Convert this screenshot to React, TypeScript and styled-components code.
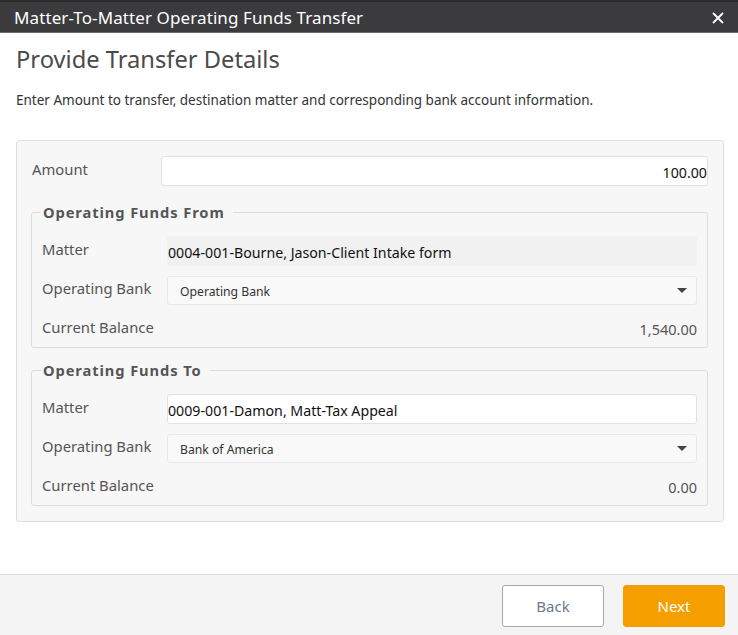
import React from "react";
import styled, { createGlobalStyle } from "styled-components";

const Global = createGlobalStyle`
  html, body { margin: 0; padding: 0; background: #ffffff; }
  body { font-family: "Noto Sans", "Open Sans", sans-serif; color: #333; }
  * { box-sizing: border-box; }
`;

const Dialog = styled.div`
  width: 738px;
  height: 635px;
  display: flex;
  flex-direction: column;
  background: #fff;
`;

const TitleBar = styled.div`
  height: 33px;
  flex: none;
  background: #3b3b3d;
  border-top: 2px solid #2b2b2c;
  border-bottom: 1px solid #6d6d6f;
  display: flex;
  align-items: center;
  justify-content: space-between;
  padding: 0 14px 0 14px;
`;

const TitleText = styled.div`
  color: #fff;
  font-size: 17px;
  letter-spacing: 0.1px;
`;

const CloseIcon = styled.svg`
  width: 12px;
  height: 12px;
  display: block;
  margin-top: 1px;
`;

const Body = styled.div`
  flex: 1;
  padding: 10px 14px 0 16px;
  display: flex;
  flex-direction: column;
`;

const Heading = styled.h1`
  margin: 0;
  font-weight: 400;
  font-size: 23.7px;
  color: #4a4a4a;
  line-height: 32px;
`;

const Intro = styled.p`
  margin: 16px 0 0 0;
  font-size: 13.5px;
  color: #333;
  line-height: 18px;
`;

const Panel = styled.div`
  margin-top: 31px;
  width: 708px;
  background: #f7f7f7;
  border: 1px solid #dedede;
  border-radius: 3px;
  padding: 15px 15px 15px 14px;
  display: flex;
  flex-direction: column;
`;

const AmountRow = styled.div`
  display: grid;
  grid-template-columns: 130px 1fr;
  align-items: center;
  height: 30px;
`;

const Label = styled.div<{ $inset?: boolean }>`
  font-size: 14.8px;
  color: #555;
  padding-left: ${(p) => (p.$inset ? "0" : "1px")};
  margin-top: -5px;
`;

const TextBox = styled.div<{ $align?: string; $filled?: boolean }>`
  height: 30px;
  background: ${(p) => (p.$filled ? "#f1f1f1" : "#fff")};
  border: 1px solid ${(p) => (p.$filled ? "#f1f1f1" : "#e2e2e2")};
  border-radius: 3px;
  display: flex;
  align-items: center;
  justify-content: ${(p) => (p.$align === "right" ? "flex-end" : "flex-start")};
  padding: 2px 0 0 0;
  font-size: 14.2px;
  color: #111;
`;

const Fieldset = styled.fieldset`
  margin: 0;
  border: 1px solid #dcdcdc;
  border-radius: 3px;
  padding: 14px 10px 4px 10px;
  display: flex;
  flex-direction: column;
  gap: 10px;
`;

const Legend = styled.legend`
  font-weight: 700;
  font-size: 14.7px;
  letter-spacing: 0.9px;
  color: #555;
  padding: 0 8px 0 2px;
  margin-left: -1px;
`;

const FieldRow = styled.div`
  display: grid;
  grid-template-columns: 125px 1fr;
  align-items: center;
  min-height: 28px;
`;

const SelectBox = styled.div`
  height: 29px;
  background: #f9f9f9;
  border: 1px solid #e8e8e8;
  border-radius: 3px;
  display: flex;
  align-items: center;
  justify-content: space-between;
  padding: 2px 9px 0 12px;
  font-size: 12.2px;
  color: #333;
`;

const Caret = styled.span`
  width: 0;
  height: 0;
  border-left: 5px solid transparent;
  border-right: 5px solid transparent;
  border-top: 5px solid #444;
  margin-top: -2px;
`;

const Balance = styled.div`
  font-size: 14.5px;
  color: #555;
  text-align: right;
`;

const Footer = styled.div`
  height: 61px;
  flex: none;
  background: #f4f4f4;
  border-top: 1px solid #dadada;
  display: flex;
  align-items: center;
  justify-content: flex-end;
  gap: 19px;
  padding: 2px 13px 0 0;
`;

const Button = styled.button<{ $primary?: boolean }>`
  width: 102px;
  height: 42px;
  border-radius: 3px;
  font-family: inherit;
  font-size: 15px;
  cursor: pointer;
  background: ${(p) => (p.$primary ? "#f59e00" : "#fff")};
  color: ${(p) => (p.$primary ? "#fff" : "#6c7a8a")};
  border: 1px solid ${(p) => (p.$primary ? "#f59e00" : "#a8a8a8")};
`;

type Group = {
  title: string;
  matter: string;
  editable: boolean;
  bank: string;
  balance: string;
};

const groups: Group[] = [
  {
    title: "Operating Funds From",
    matter: "0004-001-Bourne, Jason-Client Intake form",
    editable: false,
    bank: "Operating Bank",
    balance: "1,540.00",
  },
  {
    title: "Operating Funds To",
    matter: "0009-001-Damon, Matt-Tax Appeal",
    editable: true,
    bank: "Bank of America",
    balance: "0.00",
  },
];

const Stack = styled.div`
  display: flex;
  flex-direction: column;
  gap: 12px;
  margin-top: 16px;
`;

export default function App() {
  return (
    <>
      <Global />
      <Dialog>
        <TitleBar>
          <TitleText>Matter-To-Matter Operating Funds Transfer</TitleText>
          <CloseIcon viewBox="0 0 12 12">
            <path d="M1 1 L11 11 M11 1 L1 11" stroke="#fff" strokeWidth="1.8" fill="none" />
          </CloseIcon>
        </TitleBar>
        <Body>
          <Heading>Provide Transfer Details</Heading>
          <Intro>
            Enter Amount to transfer, destination matter and corresponding bank account information.
          </Intro>
          <Panel>
            <AmountRow>
              <Label>Amount</Label>
              <TextBox $align="right">100.00</TextBox>
            </AmountRow>
            <Stack>
              {groups.map((g) => (
                <Fieldset key={g.title}>
                  <Legend>{g.title}</Legend>
                  <FieldRow>
                    <Label $inset>Matter</Label>
                    <TextBox $filled={!g.editable}>{g.matter}</TextBox>
                  </FieldRow>
                  <FieldRow>
                    <Label $inset>Operating Bank</Label>
                    <SelectBox>
                      {g.bank}
                      <Caret />
                    </SelectBox>
                  </FieldRow>
                  <FieldRow>
                    <Label $inset>Current Balance</Label>
                    <Balance>{g.balance}</Balance>
                  </FieldRow>
                </Fieldset>
              ))}
            </Stack>
          </Panel>
        </Body>
        <Footer>
          <Button>Back</Button>
          <Button $primary>Next</Button>
        </Footer>
      </Dialog>
    </>
  );
}
